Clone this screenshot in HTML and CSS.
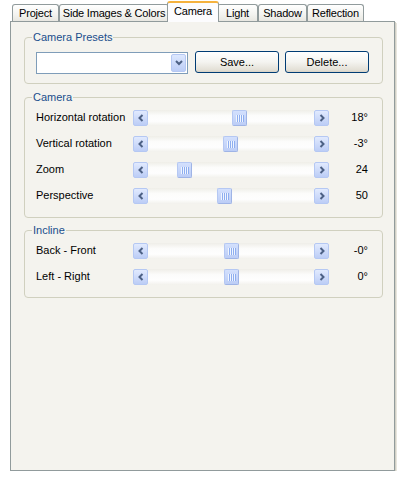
FILE: index.html
```html
<!DOCTYPE html>
<html lang="en">
  <head>
    <meta charset="UTF-8" />
    <title>Camera</title>
    <link rel="stylesheet" href="styles.css">
  </head>
  <body>
    <div class="dialog">
      <div class="tabs">
        <div class="tab">Project</div>
        <div class="tab">Side Images &amp; Colors</div>
        <div class="tab active">Camera</div>
        <div class="tab">Light</div>
        <div class="tab">Shadow</div>
        <div class="tab">Reflection</div>
      </div>

      <div class="panel">
        <!-- presets -->
        <fieldset class="group presets">
          <legend>Camera Presets</legend>
          <div class="preset-row">
            <div class="combo">
              <span class="combo-btn">
                <svg width="8" height="6" viewBox="0 0 8 6"><polyline points="1,1 4,4 7,1" fill="none" stroke="#4d6185" stroke-width="2"/></svg>
              </span>
            </div>
            <button class="btn">Save...</button>
            <button class="btn">Delete...</button>
          </div>
        </fieldset>

        <!-- camera -->
        <fieldset class="group camera">
          <legend>Camera</legend>
          <div class="row">
            <span class="label">Horizontal rotation</span>
            <div class="slider">
              <span class="arrow"><svg width="6" height="8" viewBox="0 0 6 8"><polyline points="4.5,1 1.5,4 4.5,7" fill="none" stroke="#4d6185" stroke-width="2"/></svg></span>
              <div class="track"><span class="thumb" style="left: 84px"></span></div>
              <span class="arrow"><svg width="6" height="8" viewBox="0 0 6 8"><polyline points="1.5,1 4.5,4 1.5,7" fill="none" stroke="#4d6185" stroke-width="2"/></svg></span>
            </div>
            <span class="value">18°</span>
          </div>
          <div class="row">
            <span class="label">Vertical rotation</span>
            <div class="slider">
              <span class="arrow"><svg width="6" height="8" viewBox="0 0 6 8"><polyline points="4.5,1 1.5,4 4.5,7" fill="none" stroke="#4d6185" stroke-width="2"/></svg></span>
              <div class="track"><span class="thumb" style="left: 75px"></span></div>
              <span class="arrow"><svg width="6" height="8" viewBox="0 0 6 8"><polyline points="1.5,1 4.5,4 1.5,7" fill="none" stroke="#4d6185" stroke-width="2"/></svg></span>
            </div>
            <span class="value">-3°</span>
          </div>
          <div class="row">
            <span class="label">Zoom</span>
            <div class="slider">
              <span class="arrow"><svg width="6" height="8" viewBox="0 0 6 8"><polyline points="4.5,1 1.5,4 4.5,7" fill="none" stroke="#4d6185" stroke-width="2"/></svg></span>
              <div class="track"><span class="thumb" style="left: 29px"></span></div>
              <span class="arrow"><svg width="6" height="8" viewBox="0 0 6 8"><polyline points="1.5,1 4.5,4 1.5,7" fill="none" stroke="#4d6185" stroke-width="2"/></svg></span>
            </div>
            <span class="value">24</span>
          </div>
          <div class="row">
            <span class="label">Perspective</span>
            <div class="slider">
              <span class="arrow"><svg width="6" height="8" viewBox="0 0 6 8"><polyline points="4.5,1 1.5,4 4.5,7" fill="none" stroke="#4d6185" stroke-width="2"/></svg></span>
              <div class="track"><span class="thumb" style="left: 69px"></span></div>
              <span class="arrow"><svg width="6" height="8" viewBox="0 0 6 8"><polyline points="1.5,1 4.5,4 1.5,7" fill="none" stroke="#4d6185" stroke-width="2"/></svg></span>
            </div>
            <span class="value">50</span>
          </div>
        </fieldset>

        <!-- incline -->
        <fieldset class="group incline">
          <legend>Incline</legend>
          <div class="row">
            <span class="label">Back - Front</span>
            <div class="slider">
              <span class="arrow"><svg width="6" height="8" viewBox="0 0 6 8"><polyline points="4.5,1 1.5,4 4.5,7" fill="none" stroke="#4d6185" stroke-width="2"/></svg></span>
              <div class="track"><span class="thumb" style="left: 76px"></span></div>
              <span class="arrow"><svg width="6" height="8" viewBox="0 0 6 8"><polyline points="1.5,1 4.5,4 1.5,7" fill="none" stroke="#4d6185" stroke-width="2"/></svg></span>
            </div>
            <span class="value">-0°</span>
          </div>
          <div class="row">
            <span class="label">Left - Right</span>
            <div class="slider">
              <span class="arrow"><svg width="6" height="8" viewBox="0 0 6 8"><polyline points="4.5,1 1.5,4 4.5,7" fill="none" stroke="#4d6185" stroke-width="2"/></svg></span>
              <div class="track"><span class="thumb" style="left: 76px"></span></div>
              <span class="arrow"><svg width="6" height="8" viewBox="0 0 6 8"><polyline points="1.5,1 4.5,4 1.5,7" fill="none" stroke="#4d6185" stroke-width="2"/></svg></span>
            </div>
            <span class="value">0°</span>
          </div>
        </fieldset>
      </div>
    </div>
  </body>
</html>
```

FILE: styles.css
```css
body {
  margin: 0;
  background: #ffffff;
  font-family: Tahoma, "Liberation Sans", sans-serif;
  font-size: 11px;
  color: #000;
}
.dialog {
  padding: 1px 0 0 10px;
}
.tabs {
  display: grid;
  grid-template-columns: 47px 110px 48px 41px 49px 57px;
  align-items: end;
  height: 20px;
  margin-left: 2px;
}
.tab {
  height: 17px;
  box-sizing: border-box;
  border: 1px solid #919b9c;
  border-bottom: none;
  border-radius: 3px 3px 0 0;
  background: linear-gradient(#ffffff, #f3f3ef 60%, #e8e7e1);
  text-align: center;
  line-height: 16px;
  white-space: nowrap;
  letter-spacing: -0.2px;
}
.tab.active {
  position: relative;
  z-index: 2;
  height: 21px;
  margin: 0 -2px -1px -2px;
  background: #fcfcfe;
  border-top: 2px solid #f5b23e;
  line-height: 17px;
}
.panel {
  box-sizing: border-box;
  width: 385px;
  height: 450px;
  border: 1px solid #919b9c;
  background: #f4f3ee;
  box-shadow: 1px 1px 0 #d2d0c6, 2px 2px 0 #e8e6de;
  padding-top: 0;
}
.group {
  margin: 0 11px 0 13px;
  padding: 0 7px;
  border: 1px solid #d0d0bf;
  border-radius: 4px;
}
.group legend {
  padding: 0 1px;
  line-height: 13px;
  color: #1a4e8c;
}
.presets {
  margin-top: 9px;
  padding-top: 7px;
  padding-bottom: 9px;
}
.camera {
  margin-top: 7px;
  padding-bottom: 9px;
}
.incline {
  margin-top: 6px;
  padding-bottom: 8px;
}
.preset-row {
  display: flex;
  align-items: flex-start;
  padding-left: 4px;
}
.combo {
  box-sizing: border-box;
  width: 152px;
  height: 22px;
  margin-top: 1px;
  border: 1px solid #7f9db9;
  background: #fff;
  display: flex;
  justify-content: flex-end;
  padding: 1px;
}
.combo-btn {
  width: 15px;
  height: 18px;
  box-sizing: border-box;
  border: 1px solid #b5c8f3;
  border-radius: 2px;
  background: linear-gradient(#dde8fe, #bccdf6);
  display: flex;
  align-items: center;
  justify-content: center;
}
.btn {
  box-sizing: border-box;
  width: 84px;
  height: 22px;
  margin-left: 7px;
  border: 1px solid #003c74;
  border-radius: 3px;
  background: linear-gradient(#ffffff, #f4f4f0 50%, #e3e0d6 90%, #d6d0c5);
  font: inherit;
  color: #000;
  padding: 0;
}
.btn + .btn {
  margin-left: 6px;
}
.row {
  display: grid;
  grid-template-columns: 97px 196px 39px;
  align-items: center;
  height: 26px;
  padding-left: 4px;
}
.value {
  text-align: right;
}
.slider {
  display: flex;
  height: 16px;
  margin-top: 2px;
}
.arrow {
  box-sizing: border-box;
  width: 15px;
  height: 16px;
  border: 1px solid #b5c8f3;
  border-radius: 2px;
  background: linear-gradient(#e1eafe, #bccdf6);
  display: flex;
  align-items: center;
  justify-content: center;
}
.track {
  flex: 1;
  position: relative;
  background: linear-gradient(#efeee8, #fcfcfb 35%, #fefefe 70%, #f2f1ec);
}
.thumb {
  position: absolute;
  top: 0;
  width: 15px;
  height: 16px;
  box-sizing: border-box;
  border: 1px solid #b5c8f3;
  border-right-color: #9fb4e6;
  border-bottom-color: #9fb4e6;
  border-radius: 2px;
  background: linear-gradient(#d3e0fd, #bccdf6);
}
.thumb::after {
  content: "";
  position: absolute;
  left: 3px;
  top: 4px;
  width: 8px;
  height: 7px;
  background: repeating-linear-gradient(90deg, #f0f5fe 0 1px, #8eaef0 1px 2px);
}
```
